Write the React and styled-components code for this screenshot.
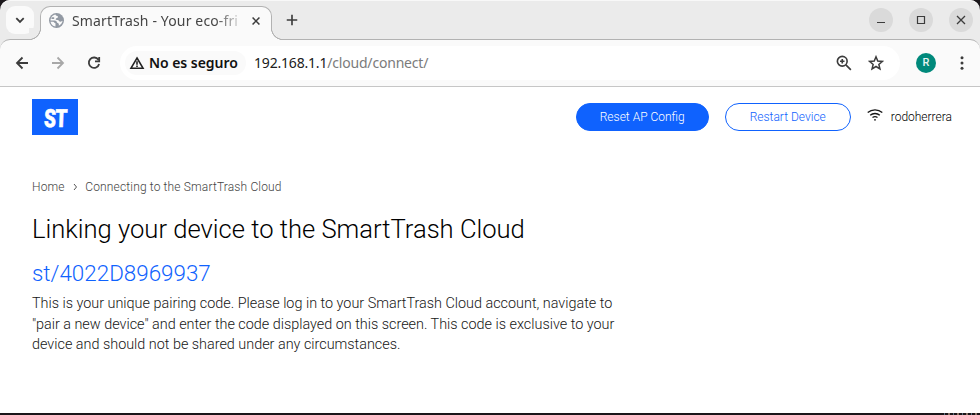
import React from "react";
import styled, { createGlobalStyle } from "styled-components";

const Global = createGlobalStyle`
  * { box-sizing: border-box; }
  html, body { margin: 0; background: #1a161a; }
  body { width: 980px; height: 415px; overflow: hidden; font-family: Roboto, sans-serif; }
`;

const Window = styled.div`
  width: 980px;
  height: 413px;
  display: flex;
  flex-direction: column;
  background: #ebebeb;
  border-radius: 10px 10px 0 0;
`;

const TabStrip = styled.div`
  position: relative;
  z-index: 1;
  height: 39px;
  flex: none;
  display: flex;
  align-items: flex-start;
  border-top: 1px solid #f8f8f8;
  border-radius: 10px 10px 0 0;
`;

const TabSearch = styled.button`
  width: 28px;
  height: 28px;
  margin: 5px 0 0 6px;
  padding: 0;
  border: 0;
  border-radius: 9px;
  background: #fafafa;
  display: grid;
  place-items: center;
`;

const Tab = styled.div`
  position: relative;
  width: 232px;
  height: 34px;
  margin: 5px 0 0 6px;
  padding: 0 10px 6px 8px;
  display: flex;
  align-items: center;
  background: #fafafa;
  border: 1px solid #b2b2b2;
  border-bottom: 0;
  border-radius: 10px 10px 0 0;

  &::before,
  &::after {
    content: "";
    position: absolute;
    bottom: 0;
    width: 12px;
    height: 12px;
  }
  &::before {
    left: -12px;
    background: radial-gradient(circle at 0 0, #ebebeb 10.7px, #b2b2b2 11.2px 11.8px, #fafafa 12.3px);
  }
  &::after {
    right: -12px;
    background: radial-gradient(circle at 100% 0, #ebebeb 10.7px, #b2b2b2 11.2px 11.8px, #fafafa 12.3px);
  }
`;

const TabTitle = styled.span`
  margin-left: 8px;
  white-space: nowrap;
  font: 400 14px/22px "Noto Sans", sans-serif;
  letter-spacing: 0.14px;
  color: #454545;
  mask-image: linear-gradient(90deg, #000 143px, rgba(0, 0, 0, 0.1) 170px);
`;

const TabClose = styled.span`
  display: flex;
  margin-left: auto;
`;

const NewTab = styled.span`
  display: flex;
  margin: 13px 0 0 14px;
`;

const WindowControls = styled.div`
  display: flex;
  gap: 16px;
  margin: 7px 7px 0 auto;
`;

const WindowButton = styled.span`
  width: 24px;
  height: 24px;
  border-radius: 50%;
  background: #dadada;
  display: grid;
  place-items: center;
`;

const Toolbar = styled.div`
  height: 48px;
  flex: none;
  display: flex;
  align-items: center;
  background: #fafafa;
  border-top: 1px solid #b2b2b2;
  border-bottom: 1px solid #c6c6c6;
  border-radius: 10px 10px 0 0;
`;

const NavIcons = styled.div`
  width: 120px;
  padding-left: 14px;
  display: flex;
  gap: 20px;
`;

const AddressBar = styled.div`
  width: 780px;
  height: 34px;
  padding: 0 16px 0 5px;
  display: flex;
  align-items: center;
  background: #fff;
  border-radius: 17px;
`;

const SecurityChip = styled.span`
  width: 121px;
  height: 24px;
  padding-left: 4px;
  display: flex;
  align-items: center;
  gap: 4px;
  background: #fafafa;
  border-radius: 12px;
  white-space: nowrap;
  font: 600 14px/24px "Noto Sans", sans-serif;
  letter-spacing: -0.05px;
  color: #111;
`;

const Url = styled.span`
  margin-left: 8px;
  white-space: nowrap;
  font: 400 14px/24px "Noto Sans", sans-serif;
  letter-spacing: -0.19px;
  color: #202020;
`;

const UrlPath = styled.span`
  color: #7b7b7b;
`;

const AddressActions = styled.span`
  display: flex;
  align-items: center;
  gap: 14px;
  margin-left: auto;
`;

const Avatar = styled.span`
  width: 20px;
  height: 20px;
  margin-left: 16px;
  border-radius: 50%;
  background: #00897b;
  color: #e6f4f2;
  font: 500 11px/20px Roboto, sans-serif;
  text-align: center;
`;

const MenuDots = styled.span`
  display: flex;
  margin-left: 18px;
`;

const Page = styled.main`
  height: 326px;
  flex: none;
  background: #fff;
  padding: 12px 28px 0 32px;
`;

const Header = styled.header`
  display: flex;
  align-items: center;
  height: 36px;
`;

const Logo = styled.div`
  width: 46px;
  height: 36px;
  background: #0f62fe;
  color: #fff;
  display: grid;
  place-items: center;
`;

const LogoText = styled.span`
  font: 900 25px/36px Roboto, sans-serif;
  letter-spacing: -0.8px;
  -webkit-text-stroke: 0.6px #fff;
  transform: translate(0.5px, 2px) scaleX(0.76) skewX(-3deg);
`;

const Actions = styled.div`
  display: flex;
  align-items: center;
  margin-left: auto;
`;

const PillButton = styled.button`
  width: ${(p) => p.$width}px;
  height: 28px;
  margin-right: 16px;
  padding: 0;
  border: 1px solid #0f62fe;
  border-radius: 14px;
  background: ${(p) => (p.$filled ? "#0f62fe" : "#fff")};
  color: ${(p) => (p.$filled ? "#fff" : "#0f62fe")};
  font: 300 12px/26px Roboto, sans-serif;
`;

const User = styled.span`
  display: flex;
  align-items: center;
  gap: 8px;
  font: 300 12px/20px Roboto, sans-serif;
  color: #000;

  svg { margin-bottom: 4px; }
`;

const Breadcrumb = styled.nav`
  display: flex;
  align-items: center;
  margin-top: 42px;
  height: 20px;
  font: 300 12px/20px Roboto, sans-serif;
  letter-spacing: 0.15px;
  color: #444;

  svg { margin: 0 7.6px 0 8px; }
`;

const Title = styled.h1`
  margin: 16px 0 0;
  font: 300 25.6px/32px Roboto, sans-serif;
  letter-spacing: -0.01px;
  color: #000;
`;

const PairingCode = styled.div`
  margin-top: 14px;
  font: 300 22.4px/28px Roboto, sans-serif;
  color: #0f62fe;
`;

const Description = styled.p`
  width: 600px;
  margin: 7px 0 0;
  font: 300 14.4px/20.5px Roboto, sans-serif;
  letter-spacing: -0.005px;
  color: #161616;
`;

const DescriptionLine = styled.span`
  display: block;
  white-space: nowrap;
`;

const DesktopEdge = styled.div`
  width: 39px;
  height: 2px;
  margin-left: auto;
  background: repeating-linear-gradient(90deg, #1a161a 0 3px, #5d7183 3px 4px, #1a161a 4px 7px, #8a7468 7px 9px);
`;

const Stroke = ({ size = 16, color = "#3c3c3c", width = 1.8, children }) => (
  <svg width={size} height={size} viewBox="0 0 16 16" fill="none" stroke={color} strokeWidth={width}>
    {children}
  </svg>
);

export default function App() {
  return (
    <>
      <Global />
      <Window>
        <TabStrip>
          <TabSearch aria-label="Search tabs">
            <Stroke><path d="M4.3 6.2 8 9.9l3.7-3.7" /></Stroke>
          </TabSearch>
          <Tab>
            <svg width="15" height="15" viewBox="0 0 16 16">
              <circle cx="8" cy="8" r="8" fill="#9299a3" />
              <path d="M7 1.5c-.2 1.7 2.8 1.2 2.6 2.7-.2 1.4-2.3.8-2.5 2.3-.1 1 .8 1 2 1 1.6 0 1.5 2 3.2 1.8 1-.1 1.5-.8 2.2-1-.3 2.4-2 4.3-4 5.2V12c0-1.3-2-1-2.2-2.3C8.2 8.4 6.5 8 4.8 8H1.6c0-3.2 2.4-6 5.4-6.5Z" fill="#fafafa" />
              <path d="M1.6 9.2h2.8c1.2 0 1.2 1.5 2.5 1.7v3.5c-2.8-.4-4.8-2.6-5.3-5.2Z" fill="#fafafa" />
              <path d="M3 4.5h2.5v2H2.5Z" fill="#9299a3" />
            </svg>
            <TabTitle>SmartTrash - Your eco-fri</TabTitle>
            <TabClose><Stroke size={10} width={2.5}><path d="m2.5 2.5 11 11m0-11-11 11" /></Stroke></TabClose>
          </Tab>
          <NewTab><Stroke size={12} width={2.2}><path d="M8 1v14M1 8h14" /></Stroke></NewTab>
          <WindowControls>
            <WindowButton><Stroke width={1}><path d="M4 10.5h8" /></Stroke></WindowButton>
            <WindowButton><Stroke width={1.2}><path d="M4.5 4.5h7v7h-7z" /></Stroke></WindowButton>
            <WindowButton><Stroke width={1.3}><path d="m4 4 8 8m0-8-8 8" /></Stroke></WindowButton>
          </WindowControls>
        </TabStrip>

        <Toolbar>
          <NavIcons>
            <Stroke><path d="M14 8H3m5.5-5.5L3 8l5.5 5.5" /></Stroke>
            <Stroke color="#a8a8a8"><path d="M2 8h11M7.5 2.5 13 8l-5.5 5.5" /></Stroke>
            <Stroke><path d="M12.4 4.8A5.2 5.2 0 1 0 13.1 9M13.2 2v4.3H9" /></Stroke>
          </NavIcons>
          <AddressBar>
            <SecurityChip>
              <svg width="16" height="16" viewBox="0 0 16 16" fill="none" stroke="#222" strokeWidth="1.6">
                <path d="M8 3 14 13.2H2ZM8 6.2v3.5M8 10.6v1.4" />
              </svg>
              No es seguro
            </SecurityChip>
            <Url>192.168.1.1<UrlPath>/cloud/connect/</UrlPath></Url>
            <AddressActions>
              <Stroke size={20} width={1.3}>
                <circle cx="6.6" cy="6.6" r="3.9" />
                <path d="m9.5 9.5 4 4M4.8 6.6h3.6M6.6 4.8v3.6" />
              </Stroke>
              <Stroke width={1.5}>
                <path d="m8 1.8 1.75 4.25 4.6.35-3.5 3 1.1 4.5L8 11.5l-3.95 2.4 1.1-4.5-3.5-3 4.6-.35Z" />
              </Stroke>
            </AddressActions>
          </AddressBar>
          <Avatar>R</Avatar>
          <MenuDots>
            <svg width="16" height="16" viewBox="0 0 16 16" fill="#3c3c3c">
              <circle cx="8" cy="2.8" r="1.5" /><circle cx="8" cy="8" r="1.5" /><circle cx="8" cy="13.2" r="1.5" />
            </svg>
          </MenuDots>
        </Toolbar>

        <Page>
          <Header>
            <Logo><LogoText>ST</LogoText></Logo>
            <Actions>
              <PillButton $filled $width={133}>Reset AP Config</PillButton>
              <PillButton $width={126}>Restart Device</PillButton>
              <User>
                <svg width="16" height="14" viewBox="0 0 16 14" fill="none" stroke="#161616" strokeWidth="1.3">
                  <path d="M.7 4.6C4.9.9 11.1.9 15.3 4.6M3.2 7.2c2.7-2.3 6.9-2.3 9.6 0M5.5 9.6c1.5-1.2 3.5-1.2 5 0" />
                  <circle cx="8" cy="11.8" r=".9" fill="#161616" stroke="none" />
                </svg>
                rodoherrera
              </User>
            </Actions>
          </Header>
          <Breadcrumb>
            <span>Home</span>
            <svg width="5" height="8" viewBox="0 0 5 8" fill="none" stroke="#555"><path d="m1 1 2.5 3L1 7" /></svg>
            <span>Connecting to the SmartTrash Cloud</span>
          </Breadcrumb>
          <Title>Linking your device to the SmartTrash Cloud</Title>
          <PairingCode>st/4022D8969937</PairingCode>
          <Description>
            <DescriptionLine>This is your unique pairing code. Please log in to your SmartTrash Cloud account, navigate to</DescriptionLine>
            <DescriptionLine>"pair a new device" and enter the code displayed on this screen. This code is exclusive to your</DescriptionLine>
            <DescriptionLine>device and should not be shared under any circumstances.</DescriptionLine>
          </Description>
        </Page>
      </Window>
      <DesktopEdge />
    </>
  );
}
